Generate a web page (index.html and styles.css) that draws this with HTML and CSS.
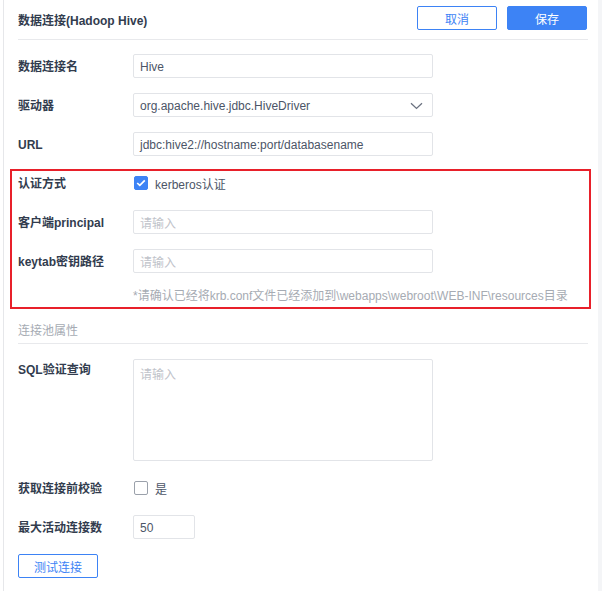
FILE: index.html
```html
<!DOCTYPE html>
<html lang="zh-CN">
<head>
<meta charset="utf-8">
<title>数据连接(Hadoop Hive)</title>
<link rel="stylesheet" href="styles.css">
</head>
<body>
<div class="page">
  <div class="panel">
    <div class="header">
      <div class="title">数据连接(Hadoop Hive)</div>
      <div class="actions">
        <button class="btn btn-outline">取消</button>
        <button class="btn btn-primary">保存</button>
      </div>
    </div>

    <div class="form">
      <div class="row">
        <label class="label">数据连接名</label>
        <div class="input"><span class="value">Hive</span></div>
      </div>
      <div class="row">
        <label class="label">驱动器</label>
        <div class="input select">
          <span class="value">org.apache.hive.jdbc.HiveDriver</span>
          <svg class="chev" width="13" height="8" viewBox="0 0 13 8"><path d="M1 1.2 L6.5 6.4 L12 1.2" fill="none" stroke="#6b7280" stroke-width="1.3"/></svg>
        </div>
      </div>
      <div class="row">
        <label class="label">URL</label>
        <div class="input"><span class="value">jdbc:hive2://hostname:port/databasename</span></div>
      </div>

      <div class="auth-box">
        <div class="row">
          <label class="label">认证方式</label>
          <div class="check-wrap">
            <span class="checkbox checked"><svg width="10" height="8" viewBox="0 0 10 8"><path d="M1.2 4 L3.8 6.4 L8.8 1.4" fill="none" stroke="#fff" stroke-width="1.7"/></svg></span>
            <span class="check-text">kerberos认证</span>
          </div>
        </div>
        <div class="row">
          <label class="label">客户端principal</label>
          <div class="input"><span class="placeholder">请输入</span></div>
        </div>
        <div class="row">
          <label class="label">keytab密钥路径</label>
          <div class="input"><span class="placeholder">请输入</span></div>
        </div>
        <div class="note">*请确认已经将krb.conf文件已经添加到\webapps\webroot\WEB-INF\resources目录</div>
      </div>

      <div class="section-title">连接池属性</div>

      <div class="row row-top">
        <label class="label">SQL验证查询</label>
        <div class="input textarea"><span class="placeholder">请输入</span></div>
      </div>
      <div class="row">
        <label class="label">获取连接前校验</label>
        <div class="check-wrap">
          <span class="checkbox"></span>
          <span class="check-text">是</span>
        </div>
      </div>
      <div class="row">
        <label class="label">最大活动连接数</label>
        <div class="input small"><span class="value">50</span></div>
      </div>
      <div class="footer">
        <button class="btn btn-outline">测试连接</button>
      </div>
    </div>
  </div>
</div>
</body>
</html>
```

FILE: styles.css
```css
* { box-sizing: border-box; }
html, body {
  margin: 0;
  padding: 0;
  height: 100%;
}
body {
  background: #f4f5f7;
  font-family: "Liberation Sans", "Noto Sans CJK SC", sans-serif;
  font-size: 12px;
  color: #323c4e;
}
.page {
  height: 591px;
  width: 598px;
  background: #fff;
  padding-left: 3px;
  overflow: hidden;
}
.panel {
  height: 100%;
  border-left: 1px solid #e6e7ea;
  padding: 0 10px 0 14px;
}
.header {
  display: flex;
  justify-content: space-between;
  align-items: center;
  height: 40px;
  padding-bottom: 1px;
  border-bottom: 1px solid #e8e9ec;
}
.title {
  font-weight: bold;
  color: #323c4e;
}
.actions {
  display: flex;
  gap: 10px;
  padding-right: 1px;
  margin-top: -2px;
}
.btn {
  width: 80px;
  height: 24px;
  border-radius: 2px;
  font-family: "Liberation Sans", "Noto Sans CJK SC", sans-serif;
  font-size: 12px;
  padding: 0;
  cursor: pointer;
}
.btn-outline {
  background: #fff;
  border: 1px solid #3d83f5;
  color: #3d83f5;
}
.btn-primary {
  background: #3d83f5;
  border: 1px solid #3d83f5;
  color: #fff;
}
.form {
  display: flex;
  flex-direction: column;
  gap: 15px;
  padding-top: 14px;
}
.row {
  display: flex;
  align-items: center;
  min-height: 24px;
}
.row-top {
  align-items: flex-start;
}
.row-top .label {
  margin-top: 1px;
}
.label {
  width: 115px;
  flex: none;
  font-weight: bold;
  color: #323c4e;
  line-height: 16px;
  padding-top: 2px;
}
.input {
  width: 300px;
  height: 24px;
  border: 1px solid #e2e4e8;
  border-radius: 2px;
  display: flex;
  align-items: center;
  padding: 1px 8px 0 6px;
  background: #fff;
}
.input .value { color: #4c5567; }
.placeholder { color: #bfc3ca; }
.select { justify-content: space-between; }
.chev { margin-right: 1px; }
.textarea {
  height: 102px;
  align-items: flex-start;
  padding-top: 5px;
}
.small { width: 62px; }
.check-wrap {
  display: flex;
  align-items: center;
  gap: 7px;
  padding-left: 1px;
}
.checkbox {
  width: 14px;
  height: 14px;
  border: 1px solid #9ba1ab;
  border-radius: 2px;
  display: flex;
  align-items: center;
  justify-content: center;
  background: #fff;
}
.checkbox.checked {
  background: #3d83f5;
  border-color: #3d83f5;
}
.check-text { color: #4c5567; }
.auth-box {
  display: flex;
  flex-direction: column;
  gap: 15px;
  margin: -2px -3px 0 -8px;
  border: 2px solid #e8202a;
  padding: 0 0 2px 6px;
}
.note {
  color: #a6abb3;
  padding-left: 115px;
  line-height: 18px;
  margin-top: -1px;
}
.section-title {
  color: #a6abb3;
  height: 31px;
  line-height: 16px;
  padding-top: 10px;
  border-bottom: 1px solid #e8e9ec;
  margin-top: -11px;
}
.footer {
  display: flex;
}
```
